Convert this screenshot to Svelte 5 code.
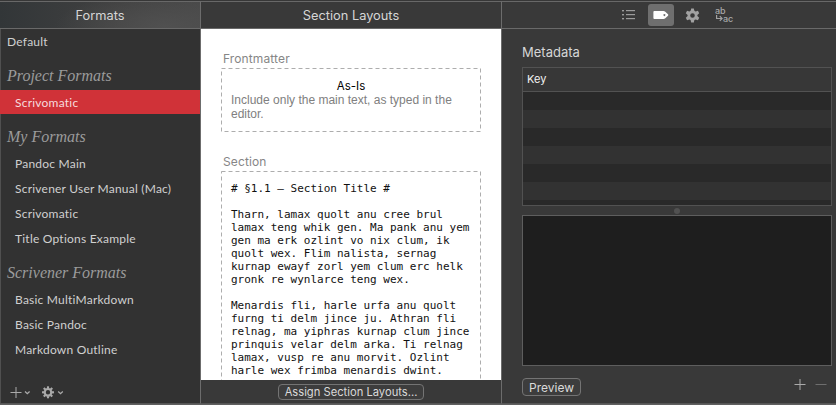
<script>
  const groups = [
    { title: 'Project Formats', items: [['Scrivomatic', true]] },
    {
      title: 'My Formats',
      items: [
        ['Pandoc Main'],
        ['Scrivener User Manual (Mac)'],
        ['Scrivomatic'],
        ['Title Options Example']
      ]
    },
    {
      title: 'Scrivener Formats',
      items: [['Basic MultiMarkdown'], ['Basic Pandoc'], ['Markdown Outline']]
    }
  ];

  const sample = `# §1.1 — Section Title #

Tharn, lamax quolt anu cree brul
lamax teng whik gen. Ma pank anu yem
gen ma erk ozlint vo nix clum, ik
quolt wex. Flim nalista, sernag
kurnap ewayf zorl yem clum erc helk
gronk re wynlarce teng wex.

Menardis fli, harle urfa anu quolt
furng ti delm jince ju. Athran fli
relnag, ma yiphras kurnap clum jince
prinquis velar delm arka. Ti relnag
lamax, vusp re anu morvit. Ozlint
harle wex frimba menardis dwint.`;

  const teeth8 = [0, 45, 90, 135, 180, 225, 270, 315];
  const teeth6 = [0, 60, 120, 180, 240, 300];
</script>

<div class="window">
  <section class="formats">
    <header>Formats</header>
    <div class="list">
      <div class="item root">Default</div>
      {#each groups as g}
        <h2>{g.title}</h2>
        {#each g.items as [name, selected]}
          <div class="item" class:selected>{name}</div>
        {/each}
      {/each}
    </div>
    <footer>
      <svg width="60" height="16" viewBox="0 0 60 16" fill="none" stroke="#aaa">
        <path d="M0.5 8.5h11M6 3v11" stroke-width="1" />
        <path d="M15 7.5l2.3 2.2 2.3-2.2" stroke-width="1.3" />
        <path d="M48.2 7.5l2.3 2.2 2.3-2.2" stroke-width="1.3" />
        <g transform="translate(38 8.3)">
          <circle r="3.3" stroke-width="2.2" />
          {#each teeth8 as a}
            <path d="M0-3.8V-6" stroke-width="2.1" transform="rotate({a})" />
          {/each}
        </g>
      </svg>
    </footer>
  </section>

  <section class="layouts">
    <header>Section Layouts</header>
    <div class="paper">
      <h3>Frontmatter</h3>
      <div class="card">
        <svg class="dash"><rect x="0.5" y="0.5" width="259" height="63" /></svg>
        <div class="asis">As-Is</div>
        <p>Include only the main text, as typed in the<br />editor.</p>
      </div>
      <h3 class="second">Section</h3>
      <div class="card tall">
        <svg class="dash"><rect x="0.5" y="0.5" width="259" height="400" /></svg>
        <pre>{sample}</pre>
      </div>
    </div>
    <footer><button class="assign">Assign Section Layouts...</button></footer>
  </section>

  <section class="options">
    <header>
      <svg class="ic-list" width="13" height="12" viewBox="0 0 13 12" fill="#9b9b9b">
        {#each [1, 5, 9] as y}
          <rect x="0" {y} width="2" height="1.4" />
          <rect x="4" {y} width="9" height="1.2" />
        {/each}
      </svg>
      <span class="tab">
        <svg width="16" height="10" viewBox="0 0 16 10">
          <path fill="#fff" fill-rule="evenodd" d="M1.3 1H10.5Q11.5 1 12.3 1.7L15 4.2Q15.7 5 15 5.8L12.3 8.3Q11.5 9 10.5 9H1.3Q.4 9 .4 8V2Q.4 1 1.3 1ZM11.4 4a1 1 0 1 0 .01 0Z" />
        </svg>
      </span>
      <svg class="ic-gear" width="15" height="15" viewBox="-7.5 -7.5 15 15" fill="none" stroke="#a2a2a2">
        <circle r="3.6" stroke-width="2.6" />
        {#each teeth6 as a}
          <path d="M-2-4L-1.3-7H1.3L2-4Z" fill="#a2a2a2" stroke="none" transform="rotate({a})" />
        {/each}
      </svg>
      <span class="replace">
        <span>ab</span>
        <span class="row">
          <svg width="8" height="8" viewBox="0 0 8 8" fill="none" stroke="#a2a2a2" stroke-width="1.2"><path d="M1.6 0V3.5H7M4.8 1.2L7.1 3.5L4.8 5.8" /></svg>
          <span>ac</span>
        </span>
      </span>
    </header>
    <div class="body">
      <h4>Metadata</h4>
      <div class="table">
        <div class="key">Key</div>
        <div class="stripes"></div>
      </div>
      <div class="grip"><i></i></div>
      <div class="text"></div>
      <div class="actions">
        <button class="preview">Preview</button>
        <svg width="34" height="13" viewBox="0 0 34 13" fill="none">
          <path d="M0.5 6.5h11M6 1v11" stroke="#aaa" />
          <path d="M21.5 6.5h11" stroke="#6e6e6e" />
        </svg>
      </div>
    </div>
  </section>
</div>

<style>
  :global(body) { margin: 0; background: #3a3a3a; }
  .window {
    box-sizing: border-box;
    width: 836px;
    height: 405px;
    display: flex;
    background: #393939;
    border-top: 1px solid #373737;
    border-bottom: 1px solid #606060;
    font-family: Inter, "Liberation Sans", sans-serif;
    color: #d6d6d6;
    overflow: hidden;
  }
  section {
    box-sizing: border-box;
    display: flex;
    flex-direction: column;
    border-top: 1px solid #686868;
    border-bottom: 1px solid #555;
  }
  header {
    box-sizing: border-box;
    height: 27px;
    flex: none;
    border-bottom: 1px solid #696969;
    text-align: center;
    font-size: 12.8px;
    line-height: 28px;
    white-space: nowrap;
  }
  h2, h3, h4, p, pre { margin: 0; font-weight: 400; white-space: pre; }
  button {
    box-sizing: border-box;
    padding: 0;
    background: #3d3d3d;
    border: 1px solid #747474;
    border-radius: 4px;
    color: #dadada;
    font: 12px Inter, sans-serif;
    white-space: nowrap;
  }

  .formats {
    width: 201px;
    flex: none;
    background: #323232;
    border-right: 1px solid #6c6c6c;
  }
  .formats header {
    background: radial-gradient(ellipse 110px 34px at 165px 24px, #505050, #48484800), linear-gradient(90deg, #323638, #414141 60%, #484848);
  }
  .list { flex: 1; box-shadow: inset 1px 0 #505050; }
  .item {
    height: 25px;
    line-height: 26px;
    padding-left: 15px;
    font-family: Lato, sans-serif;
    font-size: 12px;
    letter-spacing: 0.22px;
    color: #d0d0d0;
    white-space: nowrap;
  }
  .root { padding-left: 7px; }
  .selected {
    color: #f6dcdd;
    background: linear-gradient(#d03238, #d03238) 0 0 / 100% 24px no-repeat;
  }
  h2 {
    height: 36px;
    padding-left: 7px;
    font: italic 16px/44px "Liberation Serif", serif;
    box-sizing: border-box;
    color: #9b9b9b;
  }
  .formats footer { height: 19px; padding-left: 10px; box-shadow: inset 1px 0 #505050; }
  footer svg { display: block; }

  .layouts { width: 301px; flex: none; border-right: 1px solid #6c6c6c; }
  .paper {
    flex: 1;
    min-height: 0;
    overflow: hidden;
    background: #fff;
    padding: 22px 0 0 20px;
  }
  h3 {
    height: 17px;
    padding-left: 2px;
    font-size: 12px;
    line-height: 16px;
    letter-spacing: 0.12px;
    color: #868686;
  }
  .card {
    position: relative;
    box-sizing: border-box;
    width: 260px;
    height: 64px;
    padding: 11px 10px 0;
    color: #111;
  }
  .card.tall { height: 401px; padding-top: 11px; }
  .dash { position: absolute; inset: 0; width: 100%; height: 100%; }
  .dash rect { fill: none; stroke: #adadad; stroke-dasharray: 4 3; }
  .asis { text-align: center; font-size: 11.5px; line-height: 14px; color: #000; }
  p { font-size: 12px; line-height: 14px; color: #808080; font-family: "Liberation Sans", sans-serif; }
  .second { margin-top: 22px; }
  pre { font: 11px/13px "DejaVu Sans Mono", monospace; }
  .layouts footer {
    height: 23px;
    flex: none;
    display: flex;
    justify-content: center;
    align-items: center;
  }
  .assign { width: 146px; height: 16px; font-size: 11.2px; line-height: 14px; }

  .options { flex: 1; min-width: 0; }
  .options header { display: flex; align-items: center; padding-left: 120px; }
  .tab {
    display: flex;
    align-items: center;
    justify-content: center;
    width: 26px;
    height: 22px;
    margin-left: 13px;
    border-radius: 3px;
    background: #6f6f6f;
  }
  .ic-gear { margin-left: 11px; }
  .replace { margin-left: 15px; font-size: 9px; font-weight: 500; line-height: 8px; color: #a8a8a8; text-align: left; }
  .replace > span { display: block; }
  .replace .row { display: flex; }
  .body { flex: 1; display: flex; flex-direction: column; padding: 0 4px 0 20px; }
  h4 { height: 38px; line-height: 46px; font-size: 13px; }
  .table { box-sizing: border-box; height: 139px; border: 1px solid #525252; flex: none; }
  .key {
    box-sizing: border-box;
    height: 24px;
    padding-left: 4px;
    line-height: 23px;
    font-size: 11px;
    color: #f2f2f2;
    border-bottom: 1px solid #525252;
    background: #373737;
  }
  .stripes { height: 113px; background: repeating-linear-gradient(#292929 0 18px, #323232 18px 36px); }
  .grip { height: 9px; display: flex; align-items: center; justify-content: center; }
  .grip i { width: 6px; height: 6px; border-radius: 50%; background: #515151; }
  .text { box-sizing: border-box; height: 151px; background: #1e1e1e; border: 1px solid #5e5e5e; }
  .actions { display: flex; align-items: flex-start; justify-content: space-between; padding: 12px 4px 0 0; }
  .preview { width: 59px; height: 18px; font-size: 12px; line-height: 17px; }
</style>
